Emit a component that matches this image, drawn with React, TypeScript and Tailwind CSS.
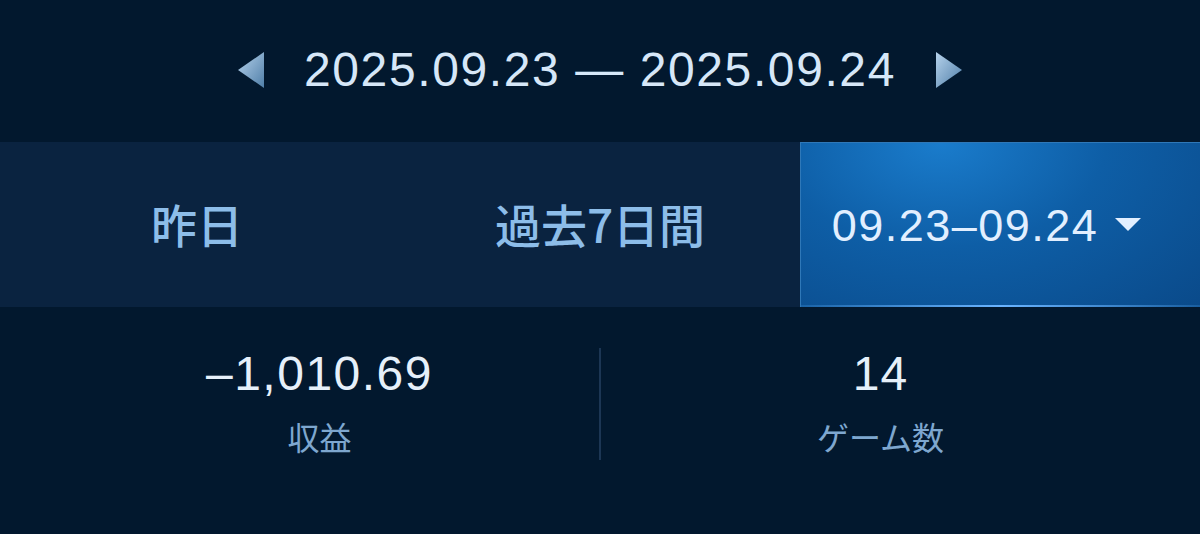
import React from "react";

const font = { fontFamily: '"Liberation Sans", Arial, "Noto Sans CJK JP", sans-serif' };
const cjk = { fontFamily: '"Noto Sans CJK JP", sans-serif' };

function Arrow({ dir }: { dir: "left" | "right" }) {
  return (
    <svg width="30" height="38" viewBox="0 0 30 38" className="block">
      <defs>
        <linearGradient id={`ag-${dir}`} x1="0" y1="0" x2="1" y2="1">
          <stop offset="0" stopColor="#b7d3ec" />
          <stop offset="1" stopColor="#4f7ea8" />
        </linearGradient>
      </defs>
      {dir === "left" ? (
        <polygon points="28,1 28,37 2,19" fill={`url(#ag-${dir})`} />
      ) : (
        <polygon points="2,1 2,37 28,19" fill={`url(#ag-${dir})`} />
      )}
    </svg>
  );
}

export default function App() {
  return (
    <div className="w-[1200px] h-[534px] bg-[#02182e] overflow-hidden" style={font}>
      {/* Date header */}
      <div className="h-[142px] flex items-start justify-center pt-[49px]">
        <div className="flex items-center gap-[38px] h-[42px]">
          <Arrow dir="left" />
          <span className="text-[48px] leading-none text-[#d6e7f8] tracking-[1.6px]">
            2025.09.23 — 2025.09.24
          </span>
          <Arrow dir="right" />
        </div>
      </div>

      {/* Tabs */}
      <div className="h-[165px] grid grid-cols-3 bg-[#0a2340]">
        <div className="flex items-center justify-center text-[46px] font-medium text-[#8dbde9] pr-[6px] pb-[3px]" style={cjk}>
          昨日
        </div>
        <div className="flex items-center justify-center text-[46px] font-medium text-[#8dbde9] pb-[3px]" style={cjk}>
          過去7日間
        </div>
        <div className="relative flex items-center justify-center border-l border-t border-[#2f78b8] bg-[radial-gradient(ellipse_at_35%_0%,#1a7ccc_0%,#0e5ea6_45%,#0a4a8a_100%)]">
          <div className="absolute left-0 right-0 bottom-0 h-[2px] bg-[linear-gradient(90deg,rgba(60,140,210,0.3),#6bb4ff_50%,rgba(60,140,210,0.3))]" />
          <div className="flex items-center gap-[17px] pr-[28px]">
            <span className="text-[45px] leading-none text-[#e2efff] tracking-[1.5px]">09.23–09.24</span>
            <svg width="26" height="14" viewBox="0 0 26 14">
              <polygon points="0,0 26,0 13,13" fill="#e2efff" />
            </svg>
          </div>
        </div>
      </div>

      {/* Stats */}
      <div className="flex px-10 pt-[43px]">
        <div className="flex-1 flex flex-col items-center">
          <span className="text-[48px] leading-none text-[#e6f0fa] tracking-[1.5px]">–1,010.69</span>
          <span className="mt-[22px] text-[32px] leading-none text-[#7ea7cf]" style={cjk}>収益</span>
        </div>
        <div className="w-[2px] h-[112px] bg-[#1c3654] -mt-[2px]" />
        <div className="flex-1 flex flex-col items-center">
          <span className="text-[48px] leading-none text-[#e6f0fa] tracking-[1px]">14</span>
          <span className="mt-[22px] text-[32px] leading-none text-[#7ea7cf]" style={cjk}>ゲーム数</span>
        </div>
      </div>
    </div>
  );
}
